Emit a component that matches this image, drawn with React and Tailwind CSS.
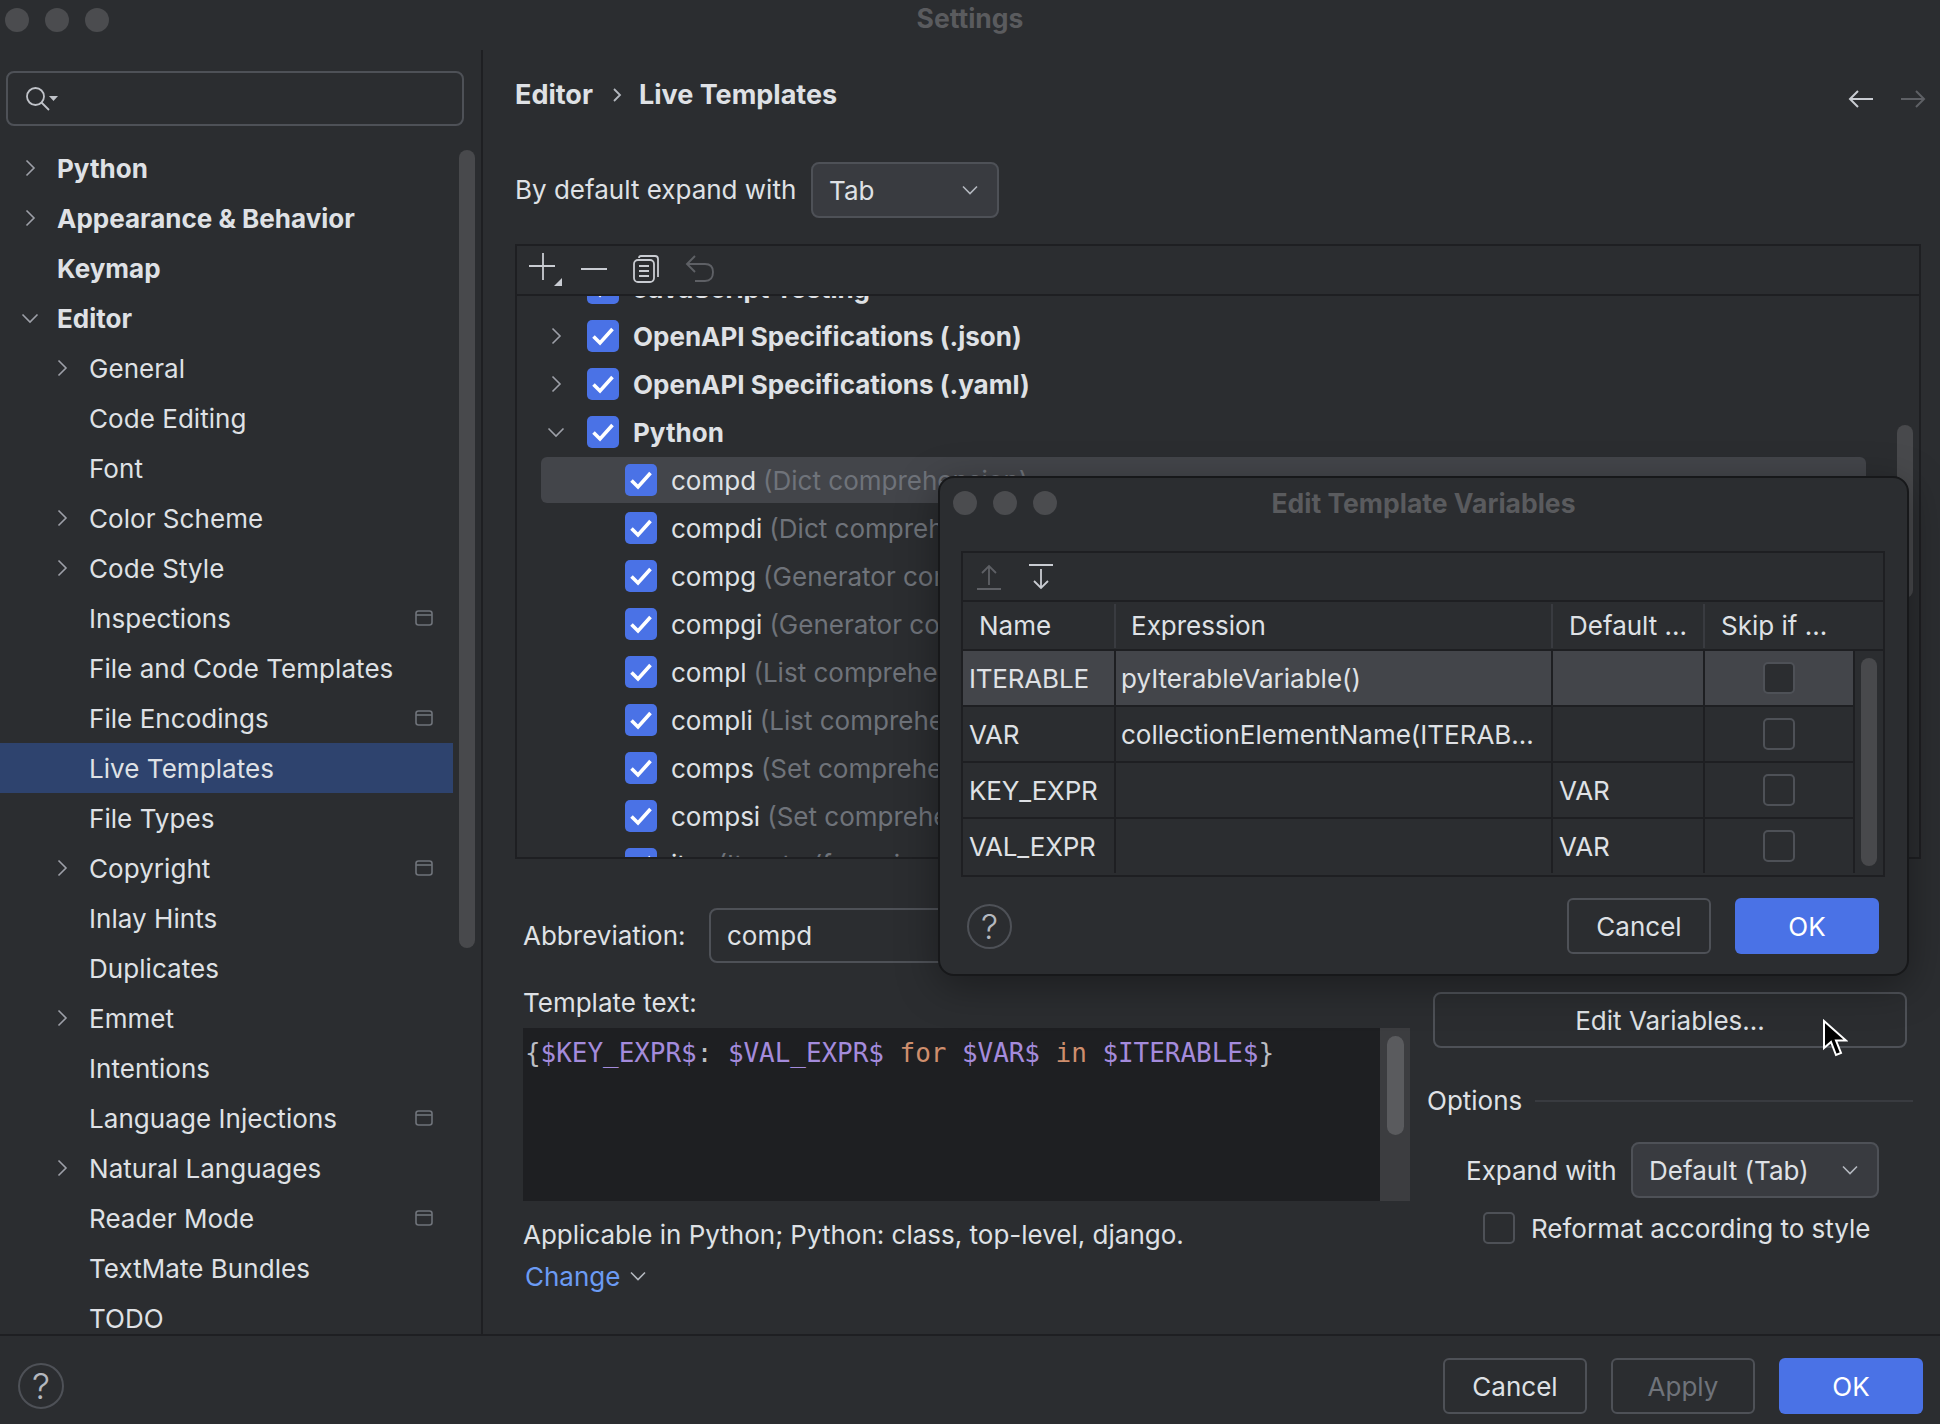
import React from 'react';

const sidebarItems = [
  { label: 'Python', bold: true, arrow: 'right' },
  { label: 'Appearance & Behavior', bold: true, arrow: 'right' },
  { label: 'Keymap', bold: true },
  { label: 'Editor', bold: true, arrow: 'down' },
  { label: 'General', arrow: 'right', sub: true },
  { label: 'Code Editing', sub: true },
  { label: 'Font', sub: true },
  { label: 'Color Scheme', arrow: 'right', sub: true },
  { label: 'Code Style', arrow: 'right', sub: true },
  { label: 'Inspections', sub: true, popup: true },
  { label: 'File and Code Templates', sub: true },
  { label: 'File Encodings', sub: true, popup: true },
  { label: 'Live Templates', sub: true, selected: true },
  { label: 'File Types', sub: true },
  { label: 'Copyright', arrow: 'right', sub: true, popup: true },
  { label: 'Inlay Hints', sub: true },
  { label: 'Duplicates', sub: true },
  { label: 'Emmet', arrow: 'right', sub: true },
  { label: 'Intentions', sub: true },
  { label: 'Language Injections', sub: true, popup: true },
  { label: 'Natural Languages', arrow: 'right', sub: true },
  { label: 'Reader Mode', sub: true, popup: true },
  { label: 'TextMate Bundles', sub: true },
  { label: 'TODO', sub: true },
];

const groupRows = [
  { label: 'JavaScript Testing' },
  { label: 'OpenAPI Specifications (.json)', arrow: 'right' },
  { label: 'OpenAPI Specifications (.yaml)', arrow: 'right' },
  { label: 'Python', arrow: 'down' },
];

const templateRows = [
  { name: 'compd', hint: '(Dict comprehension)', selected: true },
  { name: 'compdi', hint: '(Dict comprehension with if)' },
  { name: 'compg', hint: '(Generator comprehension)' },
  { name: 'compgi', hint: '(Generator comprehension with if)' },
  { name: 'compl', hint: '(List comprehension)' },
  { name: 'compli', hint: '(List comprehension with if)' },
  { name: 'comps', hint: '(Set comprehension)' },
  { name: 'compsi', hint: '(Set comprehension with if)' },
  { name: 'iter', hint: '(Iterate (for ... in ...))' },
];

const variables = [
  { name: 'ITERABLE', expr: 'pyIterableVariable()', def: '', selected: true },
  { name: 'VAR', expr: 'collectionElementName(ITERAB...', def: '' },
  { name: 'KEY_EXPR', expr: '', def: 'VAR' },
  { name: 'VAL_EXPR', expr: '', def: 'VAR' },
];

const Chevron = ({ dir = 'right', className = '' }) => (
  <svg width="18" height="18" viewBox="0 0 18 18" fill="none" stroke="#9da0a8" strokeWidth="1.6" className={className}>
    {dir === 'right' ? <path d="M5.5 1.5 L13 9 L5.5 16.5" /> : <path d="M1.5 5.5 L9 13 L16.5 5.5" />}
  </svg>
);

const SmallDown = () => (
  <svg width="16" height="10" viewBox="0 0 16 10" fill="none" stroke="#b4b8bf" strokeWidth="1.6">
    <path d="M1 1.5 L8 8.5 L15 1.5" />
  </svg>
);

const PopupIcon = () => (
  <svg width="18" height="16" viewBox="0 0 18 16" fill="none" stroke="#6f737a" strokeWidth="1.6">
    <rect x="1" y="1" width="16" height="14" rx="2.5" />
    <path d="M1 5 H17" />
  </svg>
);

const CheckOn = () => (
  <span className="flex h-[32px] w-[32px] shrink-0 items-center justify-center rounded-[5px] bg-[#4a72e6]">
    <svg width="24" height="20" viewBox="0 0 24 20" fill="none" stroke="#ffffff" strokeWidth="3.6">
      <path d="M2.5 10.5 L9 17 L21.5 3" />
    </svg>
  </span>
);

const CheckOff = ({ fill = 'bg-[#2b2d30]' }) => (
  <span className={`block h-[32px] w-[32px] shrink-0 rounded-[5px] border-2 border-[#4e5157] ${fill}`} />
);

const Button = ({ children, primary, disabled, className = '' }) => (
  <div
    className={`flex h-[56px] w-[144px] items-center justify-center rounded-[6px] text-[26px] ${
      primary ? 'bg-[#4a72e6] text-white' : 'border-2 border-[#4e5157]'
    } ${disabled ? 'text-[#6f737a]' : primary ? '' : 'text-[#dfe1e5]'} ${className}`}
  >
    {children}
  </div>
);

const HelpCircle = ({ size }) => (
  <div
    className={`flex items-center justify-center rounded-full border-2 border-[#4e5157] font-light text-[#b4b8bf] ${size}`}
  >
    ?
  </div>
);

const Dots = ({ className = '' }) => (
  <div className={`flex gap-[16px] ${className}`}>
    <span className="h-[24px] w-[24px] rounded-full bg-[#4b4c4f]" />
    <span className="h-[24px] w-[24px] rounded-full bg-[#4b4c4f]" />
    <span className="h-[24px] w-[24px] rounded-full bg-[#4b4c4f]" />
  </div>
);

const Sidebar = () => (
  <div className="w-[483px] shrink-0 overflow-hidden border-r-2 border-[#1e1f22]">
    <div className="ml-[6px] mt-[21px] flex h-[55px] w-[458px] items-center rounded-[8px] border-2 border-[#4e5157] pl-[17px]">
      <svg width="34" height="26" viewBox="0 0 34 26" fill="none" stroke="#c0c3c9" strokeWidth="1.8">
        <circle cx="10.5" cy="10.5" r="8.5" />
        <path d="M16.5 16.5 L24 24" />
        <path d="M24 10 H33 L28.5 15 Z" fill="#c0c3c9" stroke="none" />
      </svg>
    </div>
    <div className="mt-[17px] flex">
      <div className="w-[453px] shrink-0">
        {sidebarItems.map((item) => (
          <div
            key={item.label}
            className={`flex h-[50px] items-center text-[26px] text-[#dfe1e5] ${item.selected ? 'bg-[#2e436e]' : ''}`}
          >
            <span className={`flex w-[18px] shrink-0 justify-center ${item.sub ? 'ml-[53px]' : 'ml-[21px]'}`}>
              {item.arrow && <Chevron dir={item.arrow} />}
            </span>
            <span className={`ml-[18px] flex-1 whitespace-nowrap ${item.bold ? 'font-bold' : 'tracking-[0.05px]'}`}>{item.label}</span>
            {item.popup && (
              <span className="mr-[20px] flex">
                <PopupIcon />
              </span>
            )}
          </div>
        ))}
      </div>
      <div className="ml-[6px] mt-[7px] h-[798px] w-[16px] rounded-full bg-[#48494c]" />
    </div>
  </div>
);

const TreeRow = ({ row }) => (
  <div className="flex h-[48px] items-center pl-[30px]">
    <span className="flex w-[18px] shrink-0 justify-center">{row.arrow && <Chevron dir={row.arrow} />}</span>
    <span className="ml-[22px]">
      <CheckOn />
    </span>
    <span className="ml-[14px] whitespace-nowrap text-[26px] font-bold text-[#dfe1e5]">{row.label}</span>
  </div>
);

const TemplateRow = ({ row }) => (
  <div className="flex h-[48px] items-center pl-[24px] pr-[53px]">
    <div className={`flex h-[46px] flex-1 items-center rounded-[6px] pl-[84px] ${row.selected ? 'bg-[#43454a]' : ''}`}>
      <CheckOn />
      <span className="ml-[14px] whitespace-nowrap text-[26px] text-[#dfe1e5]">{row.name}</span>
      <span className="ml-[7px] whitespace-nowrap text-[26px] text-[#6f737a]">{row.hint}</span>
    </div>
  </div>
);

const TemplateTree = () => (
  <div className="relative mt-[26px] h-[615px] w-[1406px] overflow-hidden border-2 border-[#1e1f22]">
    <div className="relative z-10 flex h-[50px] items-center gap-[26px] border-b-2 border-[#1e1f22] bg-[#2b2d30] pb-[3px] pl-[11px]">
      <svg width="36" height="36" viewBox="0 0 36 36" fill="none" stroke="#c9ccd2" strokeWidth="1.8">
        <path d="M15 2 V29 M1 15 H27" />
        <path d="M34 27 V35 H26 Z" fill="#c9ccd2" stroke="none" />
      </svg>
      <svg width="26" height="4" viewBox="0 0 26 4" stroke="#c9ccd2" strokeWidth="2" className="ml-[-9px]">
        <path d="M0 2 H26" />
      </svg>
      <svg width="26" height="28" viewBox="0 0 26 28" fill="none" stroke="#c9ccd2" strokeWidth="1.8">
        <path d="M6 3 Q6 1 8 1 H22 Q25 1 25 4 V22" />
        <rect x="1" y="5" width="20" height="22" rx="4" />
        <path d="M6 11 H16 M6 16 H16 M6 21 H16" />
      </svg>
      <svg width="30" height="28" viewBox="0 0 30 28" fill="none" stroke="#5e6065" strokeWidth="1.9">
        <path d="M10 1 L2 9 L10 17 M2 9 H20 Q28 9 28 17 Q28 26 20 26 H10" />
      </svg>
    </div>
    <div className="-mt-[32px]">
      {groupRows.map((row) => (
        <TreeRow key={row.label} row={row} />
      ))}
      {templateRows.map((row) => (
        <TemplateRow key={row.name} row={row} />
      ))}
    </div>
    <div className="absolute left-[1380px] top-[179px] h-[173px] w-[16px] rounded-full bg-[#48494c]" />
  </div>
);

const TemplateText = () => (
  <div className="mt-[11px] flex h-[173px] w-[887px] bg-[#1e1f22]">
    <div className="flex-1 whitespace-pre pl-[2px] pt-[7px] font-['DejaVu_Sans_Mono',monospace] text-[26px] leading-[36px] tracking-[-0.05px] text-[#bcbec4]">
      {'{'}
      <span className="text-[#a48bdc]">$KEY_EXPR$</span>
      {': '}
      <span className="text-[#a48bdc]">$VAL_EXPR$</span>
      <span className="text-[#cf8e6d]"> for </span>
      <span className="text-[#a48bdc]">$VAR$</span>
      <span className="text-[#cf8e6d]"> in </span>
      <span className="text-[#a48bdc]">$ITERABLE$</span>
      {'}'}
    </div>
    <div className="w-[30px] bg-[#3c3d40] pl-[7px] pt-[8px]">
      <div className="h-[99px] w-[17px] rounded-full bg-[#5a5b5e]" />
    </div>
  </div>
);

const EditDialog = () => (
  <div className="absolute left-[938px] top-[476px] flex h-[500px] w-[971px] flex-col rounded-[16px] border-2 border-[#17181a] bg-[#2b2d30] shadow-[0_10px_40px_rgba(0,0,0,0.35)]">
    <div className="relative flex h-[52px] items-center justify-center">
      <Dots className="absolute left-[13px] top-[13px]" />
      <span className="text-[26.5px] font-bold text-[#5a5b5e]">Edit Template Variables</span>
    </div>
    <div className="ml-[21px] mt-[21px] w-[924px] border-2 border-[#1e1f22]">
      <div className="flex h-[49px] items-center gap-[26px] border-b-2 border-[#1e1f22] pl-[13px]">
        <svg width="26" height="26" viewBox="0 0 26 26" fill="none" stroke="#5e6065" strokeWidth="1.8">
          <path d="M13 21 V2 M6 9 L13 2 L20 9 M1 25 H25" />
        </svg>
        <svg width="26" height="26" viewBox="0 0 26 26" fill="none" stroke="#c9ccd2" strokeWidth="1.8">
          <path d="M13 5 V24 M6 17 L13 24 L20 17 M1 1 H25" />
        </svg>
      </div>
      <div className="flex h-[49px] items-center border-b-2 border-[#1e1f22] text-[26px] text-[#dfe1e5]">
        <span className="flex h-[44px] w-[153px] items-center border-r-2 border-[#393b40] pl-[16px]">Name</span>
        <span className="flex h-[44px] w-[437px] items-center border-r-2 border-[#393b40] pl-[15px]">Expression</span>
        <span className="flex h-[44px] w-[152px] items-center border-r-2 border-[#393b40] pl-[16px]">Default ...</span>
        <span className="pl-[16px]">Skip if ...</span>
      </div>
      <div className="flex">
        <div className="w-[892px]">
          {variables.map((v, i) => (
            <div
              key={v.name}
              className={`flex h-[56px] text-[26px] text-[#dfe1e5] ${i < 3 ? 'border-b-2 border-[#1e1f22]' : 'pb-[2px]'} ${
                v.selected ? 'bg-[#43454a]' : ''
              }`}
            >
              <span className="flex w-[153px] items-center border-r-2 border-[#1e1f22] pl-[6px] tracking-[-0.2px]">{v.name}</span>
              <span className="flex w-[437px] items-center whitespace-nowrap border-r-2 border-[#1e1f22] pl-[5px]">{v.expr}</span>
              <span className="flex w-[152px] items-center border-r-2 border-[#1e1f22] pl-[6px]">{v.def}</span>
              <span className="flex flex-1 items-center justify-center border-r-2 border-[#1e1f22]">
                <CheckOff fill={v.selected ? 'bg-[#2b2d30]' : 'bg-transparent'} />
              </span>
            </div>
          ))}
        </div>
        <div className="ml-[6px] mt-[7px] h-[208px] w-[16px] rounded-full bg-[#48494c]" />
      </div>
    </div>
    <div className="mt-[21px] flex items-center pl-[27px] pr-[28px]">
      <HelpCircle size="h-[45px] w-[45px] text-[34px]" />
      <Button className="ml-auto">Cancel</Button>
      <Button primary className="ml-[24px]">OK</Button>
    </div>
  </div>
);

const Mouse = () => (
  <svg width="26" height="38" viewBox="0 0 26 38" className="absolute left-[1822px] top-[1019px]">
    <path d="M2 2 L2 29 L9 23 L14 36 L19 34 L14 21.5 L24 21.5 Z" fill="#000000" stroke="#ffffff" strokeWidth="2" />
  </svg>
);

const App = () => (
  <div className="relative flex h-[1424px] w-[1940px] flex-col overflow-hidden bg-[#2b2d30] font-['Inter',sans-serif] text-[#dfe1e5]">
    <div className="relative flex h-[50px] shrink-0 items-start justify-center">
      <Dots className="absolute left-[5px] top-[8px]" />
      <span className="-mt-[1px] text-[26.5px] font-bold text-[#5a5b5e]">Settings</span>
    </div>

    <div className="flex min-h-0 flex-1">
      <Sidebar />
      <div className="flex-1 overflow-hidden pl-[32px]">
        <div className="mt-[24px] flex h-[42px] items-center text-[27px] font-bold">
          <span>Editor</span>
          <svg width="10" height="16" viewBox="0 0 10 16" fill="none" stroke="#b4b8bf" strokeWidth="1.8" className="ml-[19px]">
            <path d="M2 2 L8 8 L2 14" />
          </svg>
          <span className="ml-[17px]">Live Templates</span>
          <div className="ml-auto mr-[14px] flex items-center gap-[26px] pt-[7px]">
            <svg width="26" height="20" viewBox="0 0 26 20" fill="none" stroke="#c9ccd2" strokeWidth="2">
              <path d="M10 2 L2 10 L10 18 M2 10 H25" />
            </svg>
            <svg width="26" height="20" viewBox="0 0 26 20" fill="none" stroke="#5e6065" strokeWidth="2">
              <path d="M16 2 L24 10 L16 18 M24 10 H1" />
            </svg>
          </div>
        </div>

        <div className="mt-[46px] flex h-[56px] items-center text-[26px]">
          <span className="-mt-[2px] w-[296px] shrink-0">By default expand with</span>
          <div className="flex h-[56px] w-[188px] items-center justify-between rounded-[8px] border-2 border-[#4e5157] bg-[#393b40] pl-[16px] pr-[19px]">
            <span>Tab</span>
            <SmallDown />
          </div>
        </div>

        <TemplateTree />

        <div className="mt-[49px] flex pl-[8px] text-[26px]">
          <div className="w-[902px] shrink-0">
            <div className="flex h-[55px] items-center">
              <span className="w-[186px] shrink-0">Abbreviation:</span>
              <div className="flex h-[55px] w-[500px] items-center rounded-[8px] border-2 border-[#4e5157] pl-[16px]">compd</div>
            </div>
            <div className="mt-[24px] flex h-[30px] items-center">Template text:</div>
            <TemplateText />
            <div className="mt-[18px] flex h-[30px] items-center">Applicable in Python; Python: class, top-level, django.</div>
            <div className="mt-[12px] flex h-[30px] items-center gap-[10px] pl-[2px] text-[#6b9bf4]">
              Change
              <svg width="16" height="10" viewBox="0 0 16 10" fill="none" stroke="#b4b8bf" strokeWidth="1.6">
                <path d="M1 1.5 L8 8.5 L15 1.5" />
              </svg>
            </div>
          </div>
          <div className="flex-1 pt-[84px]">
            <div className="ml-[8px] flex h-[56px] w-[474px] items-center justify-center rounded-[8px] border-2 border-[#4e5157]">
              Edit Variables...
            </div>
            <div className="mt-[37px] flex h-[30px] items-center">
              <span className="ml-[2px]">Options</span>
              <span className="ml-[13px] mt-[2px] h-[2px] w-[378px] bg-[#393b40]" />
            </div>
            <div className="mt-[27px] flex h-[56px] items-center">
              <span className="ml-[41px] w-[165px] shrink-0">Expand with</span>
              <div className="flex h-[56px] w-[248px] items-center justify-between rounded-[8px] border-2 border-[#4e5157] bg-[#393b40] pl-[16px] pr-[19px]">
                <span className="whitespace-nowrap">Default (Tab)</span>
                <SmallDown />
              </div>
            </div>
            <div className="ml-[58px] mt-[14px] flex h-[32px] items-center">
              <CheckOff />
              <span className="ml-[16px] whitespace-nowrap">Reformat according to style</span>
            </div>
          </div>
        </div>
      </div>
    </div>

    <div className="flex h-[90px] shrink-0 items-center border-t-2 border-[#1e1f22] pl-[18px] pr-[17px] pt-[12px]">
      <HelpCircle size="h-[46px] w-[46px] text-[36px]" />
      <Button className="ml-auto">Cancel</Button>
      <Button disabled className="ml-[24px]">Apply</Button>
      <Button primary className="ml-[24px]">OK</Button>
    </div>

    <EditDialog />
    <Mouse />
  </div>
);

export default App;
